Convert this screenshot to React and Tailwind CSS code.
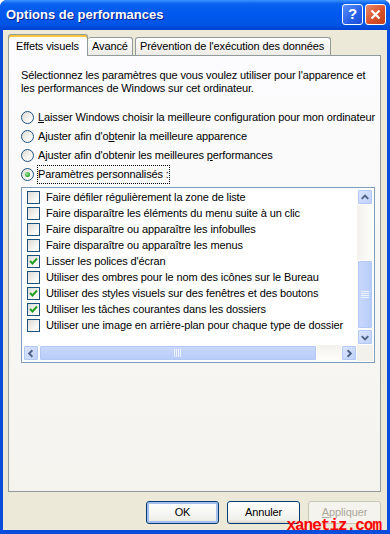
import React from "react";

const rows = [
  { label: "Faire défiler régulièrement la zone de liste", checked: false },
  { label: "Faire disparaître les éléments du menu suite à un clic", checked: false },
  { label: "Faire disparaître ou apparaître les infobulles", checked: false },
  { label: "Faire disparaître ou apparaître les menus", checked: false },
  { label: "Lisser les polices d'écran", checked: true },
  { label: "Utiliser des ombres pour le nom des icônes sur le Bureau", checked: false },
  { label: "Utiliser des styles visuels sur des fenêtres et des boutons", checked: true },
  { label: "Utiliser les tâches courantes dans les dossiers", checked: true },
  { label: "Utiliser une image en arrière-plan pour chaque type de dossier", checked: false },
];

function CheckBox({ checked }) {
  return (
    <span className="w-[13px] h-[13px] shrink-0 border border-[#1C5180] bg-[linear-gradient(135deg,#DCDBD5_0%,#F5F4F0_60%,#FFFFFF_100%)] flex items-center justify-center">
      {checked && (
        <svg width="9" height="9" viewBox="0 0 9 9">
          <path d="M1 4 L3.5 6.5 L8 1.5" stroke="#21A121" strokeWidth="2" fill="none" />
        </svg>
      )}
    </span>
  );
}

function Radio({ checked }) {
  return (
    <span className="w-[13px] h-[13px] shrink-0 rounded-full border border-[#1C5180] bg-[linear-gradient(135deg,#DCDBD5_0%,#F5F4F0_60%,#FFFFFF_100%)] flex items-center justify-center">
      {checked && <span className="w-[5px] h-[5px] rounded-full bg-[radial-gradient(circle_at_40%_40%,#A8E8A8,#21A121_70%)]" />}
    </span>
  );
}

function ScrollBtn({ dir }) {
  const paths = {
    up: "M4 9 L7.5 5.5 L11 9",
    down: "M4 6 L7.5 9.5 L11 6",
    left: "M9 4 L5.5 7.5 L9 11",
    right: "M6 4 L9.5 7.5 L6 11",
  };
  return (
    <span className="w-[16px] h-[16px] shrink-0 rounded-[2px] border border-white bg-[linear-gradient(135deg,#DCE6FD,#BED0FA)] shadow-[inset_0_0_0_1px_#B4C8F6] flex items-center justify-center">
      <svg width="15" height="15" viewBox="0 0 15 15">
        <path d={paths[dir]} stroke="#4D6185" strokeWidth="2" fill="none" />
      </svg>
    </span>
  );
}

function Grip({ vertical }) {
  return (
    <svg width="8" height="8" viewBox="0 0 8 8">
      {[0, 2, 4, 6].map((i) =>
        vertical ? (
          <line key={i} x1="0" y1={i + 0.5} x2="8" y2={i + 0.5} stroke="#EEF4FE" />
        ) : (
          <line key={i} x1={i + 0.5} y1="0" x2={i + 0.5} y2="8" stroke="#EEF4FE" />
        )
      )}
    </svg>
  );
}

function Button({ children, primary, disabled }) {
  return (
    <button
      className={`w-[73px] h-[23px] rounded-[3px] text-[11px] flex items-center justify-center ${
        disabled
          ? "border border-[#C9C7BA] bg-[#F4F3EE] text-[#ACA899]"
          : primary
          ? "border border-[#003C74] bg-[linear-gradient(180deg,#FFFFFF,#F0F0EA_85%,#D6D0C5)] text-black shadow-[inset_0_0_0_2px_#A4BEF0]"
          : "border border-[#003C74] bg-[linear-gradient(180deg,#FFFFFF,#F0F0EA_85%,#D6D0C5)] text-black"
      }`}
    >
      {children}
    </button>
  );
}

export default function App() {
  return (
    <div className="relative w-[390px] h-[534px] flex flex-col bg-[#0A4CDB] rounded-t-[7px] overflow-hidden font-['Liberation_Sans','DejaVu_Sans',sans-serif] text-[11px] tracking-[-0.12px] text-black">
      {/* Title bar */}
      <div className="h-[30px] shrink-0 flex items-center pl-[6px] pr-[4px] bg-[linear-gradient(180deg,#3D93FF_0%,#0A62F0_12%,#0058EE_45%,#0055E5_80%,#0042D4_100%)]">
        <span className="text-white font-bold text-[13px] [text-shadow:1px_1px_#0A1E8C] tracking-[0px]">
          Options de performances
        </span>
        <div className="ml-auto flex gap-[2px] mt-[-1px]">
          <span className="w-[21px] h-[21px] rounded-[3px] border border-white bg-[linear-gradient(135deg,#5B8EF8,#2660E8_60%,#1B4FD6)] flex items-center justify-center text-white font-bold text-[15px]">
            ?
          </span>
          <span className="w-[21px] h-[21px] rounded-[3px] border border-white bg-[linear-gradient(135deg,#E98A6B,#D9522C_55%,#C2401C)] flex items-center justify-center">
            <svg width="11" height="11" viewBox="0 0 11 11">
              <path d="M1.5 1.5 L9.5 9.5 M9.5 1.5 L1.5 9.5" stroke="white" strokeWidth="2.2" />
            </svg>
          </span>
        </div>
      </div>

      {/* Body */}
      <div className="flex-1 mx-[3px] mb-[4px] bg-[#ECE9D8] flex flex-col pl-[5px] pt-[4px]">
        {/* Tabs */}
        <div className="flex items-end h-[21px] whitespace-nowrap">
          <div className="relative z-10 h-[22px] w-[80px] mb-[-1px] border border-[#919B9C] border-b-0 rounded-t-[3px] bg-[#FCFCFE] flex items-center pl-[7px] pt-[1px] shadow-[inset_0_2px_0_#FFC73C,inset_0_1px_0_#E68B2C]">
            Effets visuels
          </div>
          <div className="h-[18px] w-[45px] border border-[#919B9C] border-b-0 border-l-0 rounded-t-[3px] bg-[linear-gradient(180deg,#FFFFFF,#ECEBE6)] flex items-center pl-[4px]">
            Avancé
          </div>
          <div className="h-[18px] w-[196px] ml-[2px] border border-[#919B9C] border-b-0 rounded-t-[3px] bg-[linear-gradient(180deg,#FFFFFF,#ECEBE6)] flex items-center pl-[4px]">
            Prévention de l'exécution des données
          </div>
        </div>

        {/* Panel */}
        <div className="w-[373px] h-[437px] border border-[#919B9C] bg-[linear-gradient(180deg,#FCFCFE,#F4F3EE)] pl-[12px] pr-[5px] pt-[13px] flex flex-col">
          <p className="leading-[13px] whitespace-nowrap">
            Sélectionnez les paramètres que vous voulez utiliser pour l'apparence et
            <br />
            les performances de Windows sur cet ordinateur.
          </p>

          <div className="mt-[16px] flex flex-col gap-[6px] whitespace-nowrap">
            <label className="flex items-center gap-[4px] h-[13px]">
              <Radio />
              <span><u>L</u>aisser Windows choisir la meilleure configuration pour mon ordinateur</span>
            </label>
            <label className="flex items-center gap-[4px] h-[13px]">
              <Radio />
              <span>Ajuster afin d'o<u>b</u>tenir la meilleure apparence</span>
            </label>
            <label className="flex items-center gap-[4px] h-[13px]">
              <Radio />
              <span>Ajuster afin d'obtenir les meilleures <u>p</u>erformances</span>
            </label>
            <label className="flex items-center gap-[4px] h-[13px]">
              <Radio checked />
              <span className="outline outline-1 outline-dotted outline-black">Paramètres personnalisés :</span>
            </label>
          </div>

          {/* List box */}
          <div className="mt-[6px] w-[354px] h-[176px] border border-[#7F9DB9] bg-white p-px grid grid-cols-[1fr_16px] grid-rows-[1fr_16px]">
            <div className="overflow-hidden pl-[4px] flex flex-col">
              {rows.map((r, i) => (
                <div key={i} className="h-[16px] flex items-center gap-[6px] whitespace-nowrap shrink-0">
                  <CheckBox checked={r.checked} />
                  <span>{r.label}</span>
                </div>
              ))}
            </div>

            {/* vertical scrollbar */}
            <div className="flex flex-col bg-[linear-gradient(90deg,#F3F1EC,#FEFEFB)]">
              <ScrollBtn dir="up" />
              <div className="flex-1 flex flex-col">
                <div className="h-[55px]" />
                <div className="flex-1 rounded-[2px] border border-white bg-[linear-gradient(90deg,#C9D8FC,#B8CCFA)] shadow-[inset_0_0_0_1px_#B4C8F6] flex items-center justify-center">
                  <Grip vertical />
                </div>
              </div>
              <ScrollBtn dir="down" />
            </div>

            {/* horizontal scrollbar */}
            <div className="flex bg-[linear-gradient(180deg,#F3F1EC,#FEFEFB)]">
              <ScrollBtn dir="left" />
              <div className="flex-1 flex">
                <div className="w-[278px] rounded-[2px] border border-white bg-[linear-gradient(180deg,#C9D8FC,#B8CCFA)] shadow-[inset_0_0_0_1px_#B4C8F6] flex items-center justify-center">
                  <Grip />
                </div>
              </div>
              <ScrollBtn dir="right" />
            </div>
            <div className="bg-[#F3F1EC]" />
          </div>
        </div>

        {/* Buttons */}
        <div className="mt-[9px] w-[373px] flex justify-end gap-[8px]">
          <Button primary>OK</Button>
          <Button>Annuler</Button>
          <Button disabled>
            <span><u>A</u>ppliquer</span>
          </Button>
        </div>
      </div>

      {/* watermark */}
      <span className="absolute right-[9px] bottom-0 text-[#FF0000] font-bold font-['Liberation_Mono',monospace] text-[16px] leading-[16px] tracking-[-1px]">
        xanetiz.com
      </span>
    </div>
  );
}
